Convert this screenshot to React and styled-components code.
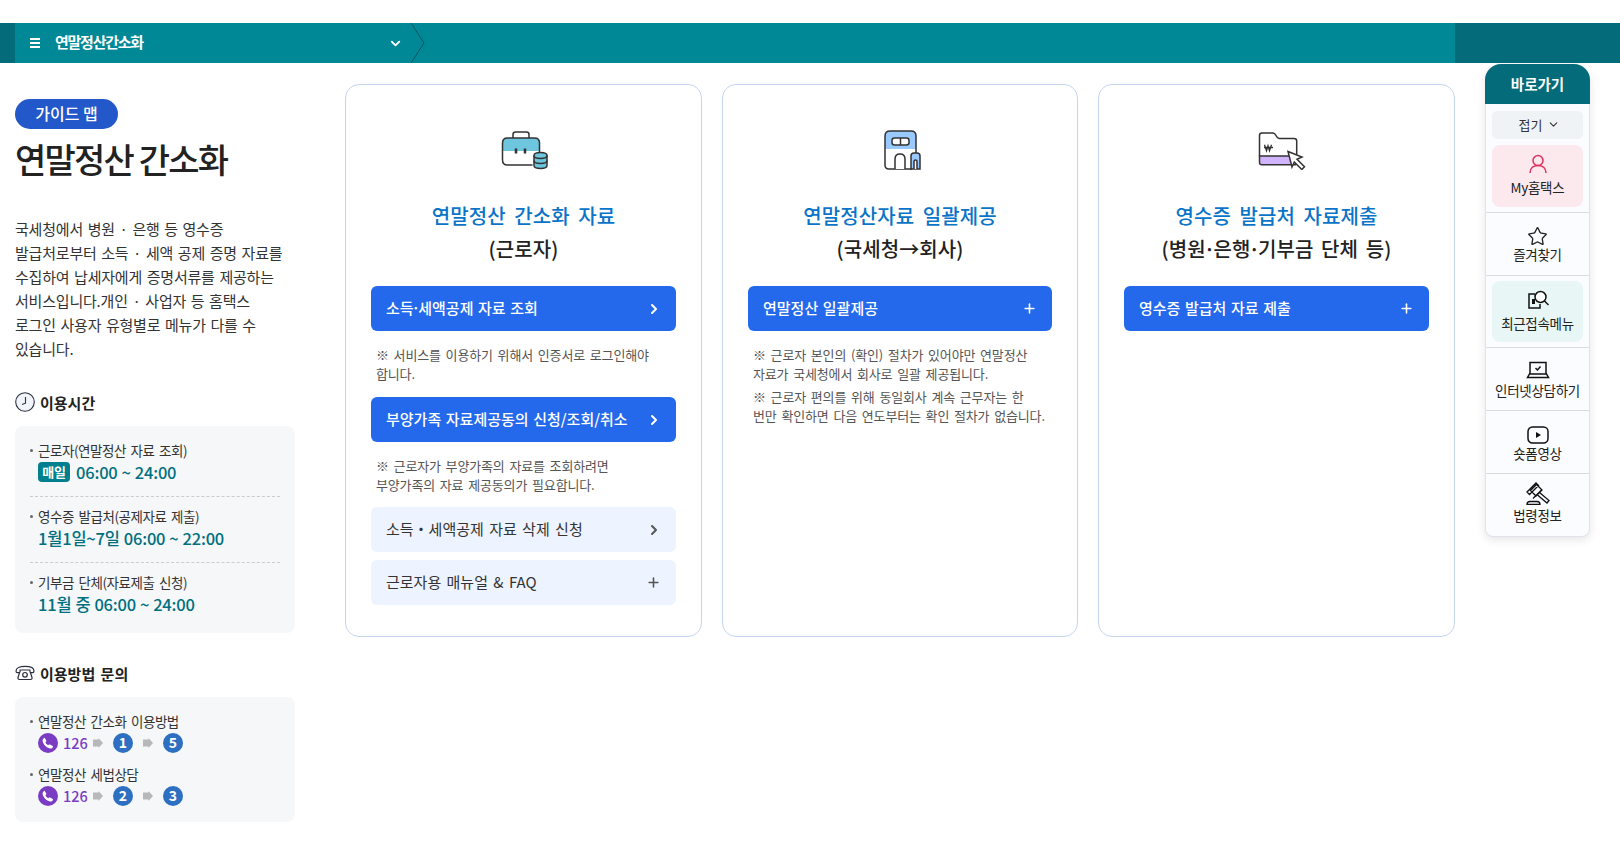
import React from 'react';
import styled, { createGlobalStyle } from 'styled-components';
import { ChevronDown, ChevronRight, Plus, Star } from 'lucide-react';

const GlobalStyle = createGlobalStyle`
  html, body { margin: 0; padding: 0; background: #fff; }
  body {
    font-family: "Noto Sans CJK KR", "Noto Sans", sans-serif;
    color: #222;
  }
  * { box-sizing: border-box; }
`;

const Page = styled.div`
  position: relative;
  width: 1620px;
  height: 841px;
  overflow: hidden;
  padding-top: 23px;
`;

const TopBar = styled.div`
  display: flex;
  height: 40px;
  background: #008896;
  border-left: 15px solid #036b7a;
  border-right: 165px solid #036b7a;
`;

const Selector = styled.div`
  display: flex;
  align-items: center;
  width: 396px;
  padding: 0 0 0 15px;
  color: #fff;
  position: relative;
`;

const BarTitle = styled.span`
  margin-left: 15px;
  font-size: 15px;
  font-weight: 700;
  letter-spacing: -1.25px;
  flex: 1;
  margin-top: -3px;
`;

const BarArrow = styled.svg`
  width: 16px;
  height: 40px;
  flex: none;
  margin-right: -15px;
  margin-left: 7px;
`;

const Main = styled.div`
  display: flex;
  padding: 21px 0 0 15px;
`;

const Aside = styled.aside`
  width: 280px;
  flex: none;
  margin-right: 50px;
  padding-top: 15px;
`;

const Badge = styled.span`
  display: block;
  width: 103px;
  height: 30px;
  border-radius: 15px;
  background: #2258c9;
  color: #fff;
  font-size: 16px;
  font-weight: 500;
  line-height: 29px;
  text-align: center;
`;

const PageTitle = styled.h1`
  margin: 4px 0 0;
  font-size: 34px;
  line-height: 52px;
  font-weight: 500;
  letter-spacing: -1.8px;
  color: #222;
`;

const Lead = styled.p`
  margin: 32px 0 0;
  font-size: 15px;
  line-height: 24px;
  letter-spacing: -0.2px;
  word-spacing: 1.5px;
  color: #333;
`;

const SectionHead = styled.h2`
  display: flex;
  align-items: center;
  gap: 5px;
  margin: ${({ $top }) => $top}px 0 ${({ $bottom }) => $bottom}px;
  height: 24px;
  font-size: 15px;
  font-weight: 700;
  word-spacing: 2px;
  color: #222;
`;

const InfoBox = styled.div`
  background: #f5f7f9;
  border-radius: 8px;
  padding: ${({ $compact }) => ($compact ? '14px 15px 16px' : '14px 15px 17px')};
`;

const InfoLabel = styled.div`
  position: relative;
  padding-left: 8px;
  font-size: 13.5px;
  line-height: 20px;
  letter-spacing: -0.45px;
  word-spacing: 2px;
  color: #333;

  &::before {
    content: '';
    position: absolute;
    left: 0;
    top: 9px;
    width: 3px;
    height: 3px;
    border-radius: 50%;
    background: #666;
  }
`;

const TimeRow = styled.div`
  display: flex;
  align-items: center;
  gap: 6px;
  margin: 0 0 0 8px;
  height: 24px;
  font-size: 16.5px;
  font-weight: 500;
  letter-spacing: -0.2px;
  word-spacing: 0.5px;
  color: #00707f;
`;

const Daily = styled.span`
  width: 32px;
  height: 20px;
  border-radius: 4px;
  background: #00808e;
  color: #fff;
  font-size: 13px;
  font-weight: 700;
  line-height: 19px;
  text-align: center;
`;

const Dashed = styled.div`
  border-top: 1px dashed #ccc;
  margin: 12px 0 9px;
`;

const CallRow = styled.div`
  display: flex;
  align-items: center;
  margin: 2px 0 ${({ $last }) => ($last ? 0 : 11)}px 8px;
  height: 20px;
`;

const PhoneDot = styled.span`
  display: flex;
  align-items: center;
  justify-content: center;
  width: 20px;
  height: 20px;
  border-radius: 50%;
  background: #7a3cc3;
`;

const CallNumber = styled.span`
  margin: -2px 5px 0;
  font-size: 14.5px;
  font-weight: 500;
  color: #7a3cc3;
`;

const NumberDot = styled.span`
  width: 20px;
  height: 20px;
  border-radius: 50%;
  background: #2d6fc0;
  color: #fff;
  font-size: 14px;
  font-weight: 700;
  line-height: 19px;
  text-align: center;
  margin: 0 10px;
`;

const Cards = styled.div`
  display: grid;
  grid-template-columns: 357px 356px 357px;
  gap: 20px;
`;

const Card = styled.section`
  height: 553px;
  border: 1px solid #c5d5f0;
  border-radius: 14px;
  padding: 45px 25px 0;
`;

const IconWrap = styled.div`
  display: flex;
  justify-content: center;
  height: 44px;
  padding: ${({ $top }) => $top || 0}px 0 0 ${({ $shift }) => $shift}px;
`;

const CardTitle = styled.h3`
  margin: 25px 0 0;
  text-align: center;
  font-size: 20px;
  line-height: 34px;
  font-weight: 500;
  letter-spacing: 0.1px;
  word-spacing: 4px;
  color: #0a74c8;
`;

const CardSub = styled.div`
  margin-bottom: 21px;
  text-align: center;
  font-size: 20px;
  line-height: 32px;
  font-weight: 500;
  letter-spacing: 0.1px;
  word-spacing: 3px;
  color: #222;
`;

const ActionButton = styled.div`
  display: flex;
  align-items: center;
  justify-content: space-between;
  height: 45px;
  padding: 0 15px;
  border-radius: 6px;
  margin-bottom: ${({ $gap }) => $gap || 0}px;
  background: ${({ $light }) => ($light ? '#edf3ff' : '#2469eb')};
  color: ${({ $light }) => ($light ? '#333' : '#fff')};
  font-size: 15px;
  font-weight: ${({ $light }) => ($light ? 400 : 500)};
  word-spacing: ${({ $light }) => ($light ? 2 : 1.2)}px;

  span { margin-top: -2px; }
  svg { flex: none; color: ${({ $light }) => ($light ? '#555' : '#fff')}; }
`;

const ArrowGlyph = styled(ChevronRight)`
  margin-right: -1px;
`;

const TightDot = styled.span`
  margin: 0 -2px;
`;

const Note = styled.p`
  margin: ${({ $first }) => ($first ? '15px' : '5px')} 0 ${({ $end }) => $end || 0}px 5px;
  font-size: 13px;
  line-height: 18.5px;
  letter-spacing: -0.15px;
  word-spacing: 2px;
  color: #555;
`;

const QuickPanel = styled.nav`
  position: absolute;
  left: 1485px;
  top: 64px;
  width: 105px;
  height: 473px;
  background: #fbfcff;
  border: 1px solid #e0e3ea;
  border-top: 0;
  border-radius: 16px 16px 8px 8px;
  box-shadow: 0 3px 10px rgba(0, 0, 0, 0.1);
`;

const QuickHead = styled.div`
  height: 40px;
  margin: 0 -1px;
  background: #036b7a;
  border-radius: 16px 16px 0 0;
  color: #fff;
  font-size: 14.5px;
  font-weight: 700;
  line-height: 40px;
  text-align: center;
`;

const FoldButton = styled.div`
  display: flex;
  align-items: center;
  justify-content: center;
  gap: 5px;
  height: 28px;
  margin: 7px 6px 6px;
  padding: 0 0 2px 4px;
  background: #f0f3f5;
  border-radius: 5px;
  font-size: 13px;
  color: #333;
`;

const QuickItem = styled.div`
  border-bottom: ${({ $last }) => ($last ? '0' : '1px solid #d9dbe4')};
  height: ${({ $h }) => $h}px;
  padding: ${({ $pad }) => $pad || '0'};
`;

const QuickInner = styled.div`
  display: flex;
  flex-direction: column;
  align-items: center;
  height: 100%;
  padding-top: ${({ $top }) => $top}px;
  border-radius: 8px;
  background: ${({ $bg }) => $bg || 'transparent'};
  font-size: 13.5px;
  line-height: 18px;
  letter-spacing: -0.3px;
  white-space: nowrap;
  color: #222;

  svg { flex: none; }
  span { margin-top: ${({ $gap }) => $gap}px; }
`;

const MenuIcon = () => (
  <svg width="10" height="10" viewBox="0 0 10 10">
    <path d="M0 1h10M0 5h10M0 9h10" stroke="#fff" strokeWidth="1.8" />
  </svg>
);

const ClockIcon = () => (
  <svg width="20" height="20" viewBox="0 0 20 20" fill="none">
    <circle cx="10" cy="10" r="9.3" fill="#f2f4fb" stroke="#2a3040" strokeWidth="1.1" />
    <path d="M10.500 5v6.200L7 12.400" stroke="#2a3040" strokeWidth="1.1" />
  </svg>
);

const TelIcon = () => (
  <svg width="20" height="16" viewBox="0 0 20 16" fill="none" stroke="#2a3040" strokeWidth="1.2">
    <path d="M1 6c0-3 4-4.600 9-4.600S19 3 19 6c0 1-.4 1.700-1.400 1.700h-1.700c-.9 0-1-.7-1-1.600V5H5.100v1.100c0 .9-.1 1.600-1 1.600H2.400C1.400 7.700 1 7 1 6z" />
    <path d="M4.500 7.700 3 12.500c-.3 1.200.2 2 1.500 2h11c1.300 0 1.800-.8 1.500-2l-1.500-4.800" />
    <circle cx="10" cy="9.800" r="2.300" />
  </svg>
);

const PhoneGlyph = () => (
  <svg width="12" height="12" viewBox="0 0 12 12">
    <path d="M2.800.9 4.300 3.600c.2.400.1.700-.2 1l-.7.700c.5 1.200 1.300 2.200 2.800 3l.9-.7c.3-.2.600-.3 1-.1l2.600 1.500c.4.200.4.600.2.900-.7 1.200-1.700 1.800-2.900 1.500C4.400 10.700 1.300 7.500.6 4 .4 2.700 1 1.700 2.100.9c.3-.2.500-.2.700 0z" fill="#fff" />
  </svg>
);

const StepArrow = () => (
  <svg width="10" height="10" viewBox="0 0 10 10" style={{ flex: 'none' }}>
    <path d="M0 1.500h5.500V0L10 5l-4.500 5V8.500H0z" fill="#b8b8b8" />
  </svg>
);

const BagIcon = () => (
  <svg width="48" height="40" viewBox="0 0 48 40" fill="none" stroke="#333" strokeWidth="1.500">
    <path d="M12 8V4.500C12 3 13 2 14.500 2h11C27 2 28 3 28 4.500V8" />
    <path d="M1.500 13c0-3 2-5 5-5h27c3 0 5 2 5 5v8h-37z" fill="#6dc5de" stroke="none" />
    <path d="M6.500 8h27c3 0 5 2 5 5v12M31.500 35h-25c-3 0-5-2-5-5V13c0-3 2-5 5-5" />
    <path d="M15 18.500v5M24 18.500v5" strokeWidth="2.500" />
    <path d="M33 25.500c0-1.800 2.700-3 6.500-3s6.500 1.200 6.500 3v10c0 1.800-2.700 3-6.500 3S33 37.300 33 35.500z" fill="#6dc5de" />
    <path d="M33 25.500c0 1.800 2.700 3 6.500 3s6.500-1.200 6.500-3M33 30.500c0 1.800 2.700 3 6.500 3s6.500-1.200 6.500-3" />
  </svg>
);

const BuildingIcon = () => (
  <svg width="40" height="40" viewBox="0 0 40 40" fill="none" stroke="#333" strokeWidth="1.500">
    <path d="M2 19V6c0-3 2-5 5-5h21c3 0 5 2 5 5v13z" fill="#99c9ff" stroke="none" />
    <path d="M29 39H6c-2.500 0-4-1.500-4-4V6c0-3 2-5 5-5h21c3 0 5 2 5 5v17" />
    <rect x="9" y="8" width="17" height="7" rx="2.500" fill="#fff" />
    <path d="M17.500 8v7" />
    <path d="M12 39V29c0-3 2-5 5-5s5 2 5 5v10" fill="#fff" />
    <path d="M28 39V26c0-2 1-3 3-3h3c2 0 3 1 3 3v13z" fill="#99c9ff" />
    <path d="M31 39v-7c0-1 .7-2 1.500-2s1.500 1 1.500 2v7" fill="#fff" />
  </svg>
);

const FolderIcon = () => (
  <svg width="48" height="38" viewBox="0 0 48 38" fill="none" stroke="#333" strokeWidth="1.500">
    <path d="M1.500 24h37v7c0 1-1 1.800-2 1.800H4c-1.500 0-2.500-1-2.500-2.300z" fill="#d0b3fb" />
    <path d="M1.500 24V3.500C1.500 2 2.500 1 4 1h11c1.500 0 2 .6 3 2.500 1 2 1.500 3 3.500 3H36c1.700 0 2.700 1 2.700 2.500V24" />
    <path d="M6 15.500h9M6.500 12.800l2 6 1.500-5 1.500 5 2-6" strokeWidth="1.300" />
    <path d="M30 19.500 44 25l-5 2.300 7.500 7.500-2.700 2.700-7.500-7.500-2.300 5z" fill="#fff" />
  </svg>
);

const UserIcon = () => (
  <svg width="20" height="20" viewBox="0 0 20 20" fill="none" stroke="#e0325f" strokeWidth="1.500">
    <circle cx="10" cy="6.500" r="5" />
    <path d="M2 19c0-5 3.500-7.500 8-7.500s8 2.500 8 7.500" />
  </svg>
);

const SearchDocIcon = () => (
  <svg width="22" height="20" viewBox="0 0 22 20" fill="none" stroke="#111" strokeWidth="1.500">
    <path d="M8 4H2v14h11v-4" />
    <path d="M5 9h3v5H5z" fill="#111" stroke="none" />
    <circle cx="13.500" cy="7" r="5.500" fill="#fff" />
    <path d="M17.500 11l4 4" />
  </svg>
);

const LaptopIcon = () => (
  <svg width="24" height="18" viewBox="0 0 24 18" fill="none" stroke="#111" strokeWidth="1.500">
    <path d="M4 13V1.500h16V13" />
    <path d="M3.500 13h17l2 3.500H1.500z" />
    <path d="M9.500 7l2 2 3-3.500" />
  </svg>
);

const PlayIcon = () => (
  <svg width="22" height="18" viewBox="0 0 22 18" fill="none" stroke="#111" strokeWidth="1.500">
    <rect x="1" y="1" width="20" height="16" rx="4.500" />
    <path d="M9 6v6l5-3z" fill="#111" stroke="none" />
  </svg>
);

const GavelIcon = () => (
  <svg width="24" height="23" viewBox="0 0 24 23" fill="none" stroke="#111" strokeWidth="1.300">
    <path d="M1 10 10 1l2.500 2.500-9 9zM4.500 8.500 10.500 2.500 16 8l-6 6zM7 16.500l9-9" />
    <path d="M13.500 10.500 23 18.500 21 21l-9.500-8" />
    <path d="M1 22.500c0-2 1-3 3-3h7c2 0 3 1 3 3z" />
  </svg>
);

const hours = [
  { label: '근로자(연말정산 자료 조회)', time: '06:00 ~ 24:00', daily: true },
  { label: '영수증 발급처(공제자료 제출)', time: '1월1일~7일 06:00 ~ 22:00' },
  { label: '기부금 단체(자료제출 신청)', time: '11월 중 06:00 ~ 24:00' },
];

const calls = [
  { label: '연말정산 간소화 이용방법', steps: ['1', '5'] },
  { label: '연말정산 세법상담', steps: ['2', '3'] },
];

export default function App() {
  return (
    <Page>
      <GlobalStyle />
      <TopBar>
        <Selector>
          <MenuIcon />
          <BarTitle>연말정산간소화</BarTitle>
          <ChevronDown size={15} strokeWidth={3} />
          <BarArrow viewBox="0 0 16 40" fill="none">
            <path d="M1 0l13 20L1 40" stroke="#04545f" strokeWidth="1" />
          </BarArrow>
        </Selector>
      </TopBar>

      <Main>
        <Aside>
          <Badge>가이드 맵</Badge>
          <PageTitle>연말정산 간소화</PageTitle>
          <Lead>
            국세청에서 병원 · 은행 등 영수증<br />
            발급처로부터 소득 · 세액 공제 증명 자료를<br />
            수집하여 납세자에게 증명서류를 제공하는<br />
            서비스입니다.개인 · 사업자 등 홈택스<br />
            로그인 사용자 유형별로 메뉴가 다를 수<br />
            있습니다.
          </Lead>

          <SectionHead $top={29} $bottom={12}><ClockIcon />이용시간</SectionHead>
          <InfoBox>
            {hours.map((h, i) => (
              <React.Fragment key={h.label}>
                {i > 0 && <Dashed />}
                <InfoLabel>{h.label}</InfoLabel>
                <TimeRow>
                  {h.daily && <Daily>매일</Daily>}
                  {h.time}
                </TimeRow>
              </React.Fragment>
            ))}
          </InfoBox>

          <SectionHead $top={28} $bottom={12}><TelIcon />이용방법 문의</SectionHead>
          <InfoBox $compact>
            {calls.map((c, i) => (
              <React.Fragment key={c.label}>
                <InfoLabel>{c.label}</InfoLabel>
                <CallRow $last={i === calls.length - 1}>
                  <PhoneDot><PhoneGlyph /></PhoneDot>
                  <CallNumber>126</CallNumber>
                  <StepArrow />
                  <NumberDot>{c.steps[0]}</NumberDot>
                  <StepArrow />
                  <NumberDot>{c.steps[1]}</NumberDot>
                </CallRow>
              </React.Fragment>
            ))}
          </InfoBox>
        </Aside>

        <Cards>
          <Card>
            <IconWrap $shift={3}><BagIcon /></IconWrap>
            <CardTitle>연말정산 간소화 자료</CardTitle>
            <CardSub>(근로자)</CardSub>
            <ActionButton>
              <span>소득<TightDot>·</TightDot>세액공제 자료 조회</span>
              <ArrowGlyph size={16} strokeWidth={3} />
            </ActionButton>
            <Note $first $end={14}>
              ※ 서비스를 이용하기 위해서 인증서로 로그인해야<br />합니다.
            </Note>
            <ActionButton>
              <span>부양가족 자료제공동의 신청/조회/취소</span>
              <ArrowGlyph size={16} strokeWidth={3} />
            </ActionButton>
            <Note $first $end={13}>
              ※ 근로자가 부양가족의 자료를 조회하려면<br />부양가족의 자료 제공동의가 필요합니다.
            </Note>
            <ActionButton $light $gap={8}>
              <span>소득・세액공제 자료 삭제 신청</span>
              <ArrowGlyph size={16} strokeWidth={3} />
            </ActionButton>
            <ActionButton $light>
              <span>근로자용 매뉴얼 &amp; FAQ</span>
              <Plus size={15} strokeWidth={2.5} />
            </ActionButton>
          </Card>

          <Card>
            <IconWrap $shift={6}><BuildingIcon /></IconWrap>
            <CardTitle>연말정산자료 일괄제공</CardTitle>
            <CardSub>(국세청→회사)</CardSub>
            <ActionButton>
              <span>연말정산 일괄제공</span>
              <Plus size={15} strokeWidth={2.5} />
            </ActionButton>
            <Note $first>
              ※ 근로자 본인의 (확인) 절차가 있어야만 연말정산<br />자료가 국세청에서 회사로 일괄 제공됩니다.
            </Note>
            <Note>
              ※ 근로자 편의를 위해 동일회사 계속 근무자는 한<br />번만 확인하면 다음 연도부터는 확인 절차가 없습니다.
            </Note>
          </Card>

          <Card>
            <IconWrap $shift={11} $top={2}><FolderIcon /></IconWrap>
            <CardTitle>영수증 발급처 자료제출</CardTitle>
            <CardSub>(병원<TightDot>·</TightDot>은행<TightDot>·</TightDot>기부금 단체 등)</CardSub>
            <ActionButton>
              <span>영수증 발급처 자료 제출</span>
              <Plus size={15} strokeWidth={2.5} />
            </ActionButton>
          </Card>
        </Cards>
      </Main>

      <QuickPanel>
        <QuickHead>바로가기</QuickHead>
        <FoldButton>접기 <ChevronDown size={13} /></FoldButton>
        <QuickItem $h={68} $pad="0 6px 5px">
          <QuickInner $bg="#fbe9ee" $top={9} $gap={4}>
            <UserIcon />
            <span>My홈택스</span>
          </QuickInner>
        </QuickItem>
        <QuickItem $h={63}>
          <QuickInner $top={13} $gap={-2}>
            <Star size={21} color="#222" strokeWidth={1.5} />
            <span>즐겨찾기</span>
          </QuickInner>
        </QuickItem>
        <QuickItem $h={72} $pad="5px 6px">
          <QuickInner $bg="#e9f6f6" $top={9} $gap={4}>
            <SearchDocIcon />
            <span>최근접속메뉴</span>
          </QuickInner>
        </QuickItem>
        <QuickItem $h={63}>
          <QuickInner $top={13} $gap={2}>
            <LaptopIcon />
            <span>인터넷상담하기</span>
          </QuickInner>
        </QuickItem>
        <QuickItem $h={63}>
          <QuickInner $top={15} $gap={0}>
            <PlayIcon />
            <span>숏폼영상</span>
          </QuickInner>
        </QuickItem>
        <QuickItem $h={63} $last>
          <QuickInner $top={8} $gap={1}>
            <GavelIcon />
            <span>법령정보</span>
          </QuickInner>
        </QuickItem>
      </QuickPanel>
    </Page>
  );
}
